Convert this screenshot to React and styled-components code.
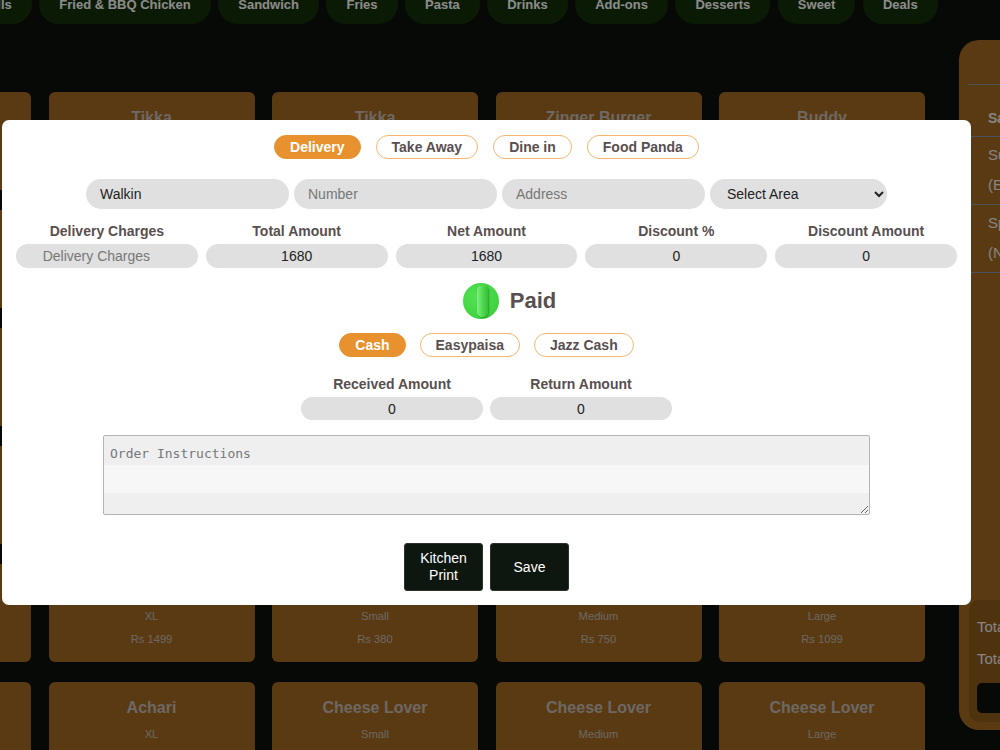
import React from 'react';
import styled, { createGlobalStyle } from 'styled-components';

const GlobalStyle = createGlobalStyle`
  * { box-sizing: border-box; }
  body {
    margin: 0;
    overflow: hidden;
    background: #0d120d;
    font-family: "Liberation Sans", Arial, sans-serif;
  }
`;

const Page = styled.div`
  width: 100vw;
  height: 100vh;
  overflow: hidden;
`;

const Categories = styled.nav`
  display: flex;
  gap: 7.5px;
  margin: -16px 0 0 -40px;
`;

const CatPill = styled.button`
  flex: none;
  height: 40px;
  padding: 0 20px;
  border: none;
  border-radius: 20px;
  background: #14300a;
  color: #ffffff;
  font: bold 13px "Liberation Sans", Arial, sans-serif;
`;

const Main = styled.main`
  display: flex;
  align-items: flex-start;
  gap: 21px;
  margin: 16px 0 0 -175px;
`;

const MenuScroll = styled.section`
  flex: none;
  width: 1113px;
  height: 660px;
  margin-top: 50px;
  padding-top: 2px;
  overflow-y: auto;

  &::-webkit-scrollbar { width: 4px; }
  &::-webkit-scrollbar-track { background: #13300a; }
  &::-webkit-scrollbar-thumb { background: #a76c25; border-radius: 2px; }
`;

const MenuGrid = styled.div`
  display: grid;
  grid-template-columns: repeat(5, 206px);
  column-gap: 17.5px;
  row-gap: 20px;
`;

const ItemCard = styled.div`
  height: 98px;
  border-radius: 6px;
  background: #a56a23;
  color: #c6beb6;
  display: flex;
  flex-direction: column;
  align-items: center;
  justify-content: center;
  gap: 9px;
`;

const ItemName = styled.div`
  font-weight: bold;
  font-size: 16px;
  line-height: 20px;
`;

const ItemMeta = styled.div`
  font-size: 11.2px;
  line-height: 14px;
`;

/* right side order panel */
const OrderPanel = styled.aside`
  flex: none;
  width: 300px;
  height: 690px;
  border-radius: 20px;
  background: #a56a23;
  padding: 0 10px 8px 9px;
  display: flex;
  flex-direction: column;
  color: #f0f0f0;
`;

const PanelHead = styled.div`
  height: 45px;
  border-bottom: 1px solid #8a98ac;
`;

const OrderRow = styled.div`
  border-bottom: 1px solid #8a98ac;
  padding: ${p => (p.head ? '25px 0 10px 20px' : '3px 0 4px 20px')};
  font-weight: ${p => (p.head ? 'bold' : 'normal')};
  font-size: ${p => (p.head ? '14px' : '15px')};
  line-height: ${p => (p.head ? '16px' : '30px')};
`;

const Summary = styled.div`
  margin-top: auto;
  margin-left: 1px;
  background: #905d1b;
  border-radius: 10px;
  padding: 11px 8px 9px;
  font-size: 15px;
`;

const SumLine = styled.div`
  line-height: 32px;
`;

const CheckoutButton = styled.div`
  margin-top: 8px;
  height: 30px;
  border-radius: 5px;
  background: #0d120d;
`;

/* modal */
const Overlay = styled.div`
  position: fixed;
  inset: 0;
  z-index: 10;
  background: rgba(0, 0, 0, 0.45);
  display: flex;
  align-items: flex-start;
  padding: 120px 0 0 2px;
`;

const Modal = styled.div`
  width: 969px;
  height: 485px;
  background: #ffffff;
  border-radius: 7px;
  padding: 15px 14px 14px;
  display: flex;
  flex-direction: column;
  align-items: center;
  color: #594f4f;
`;

const ChipRow = styled.div`
  display: flex;
  justify-content: center;
  gap: ${p => p.gap || 15}px;
  margin-top: ${p => p.top || 0}px;
`;

const Chip = styled.button`
  height: 24px;
  padding: 0 15px;
  border-radius: 12px;
  border: 1px solid ${p => (p.active ? '#e8922f' : '#f2b66e')};
  background: ${p => (p.active ? '#e8922f' : '#ffffff')};
  color: ${p => (p.active ? '#ffffff' : '#594f4f')};
  font: bold 14px "Liberation Sans", Arial, sans-serif;
`;

const CustomerRow = styled.div`
  display: flex;
  gap: 5px;
  margin-top: 20px;
`;

const TextField = styled.input`
  width: ${p => p.w || 203}px;
  height: ${p => p.h || 30}px;
  border: none;
  border-radius: 15px;
  background: #e0e0e0;
  padding: 0 ${p => p.padr || 14}px 0 14px;
  font: 14px "Liberation Sans", Arial, sans-serif;
  color: #222222;
  text-align: ${p => (p.center ? 'center' : 'left')};
  outline: none;

  &::placeholder { color: #777777; }
`;

const AreaSelect = styled.select`
  width: 177px;
  height: 30px;
  border: none;
  border-radius: 15px;
  background: #e0e0e0;
  padding: 0 8px 0 13px;
  font: 14px "Liberation Sans", Arial, sans-serif;
  color: #222222;
`;

const AmountGrid = styled.div`
  width: 100%;
  display: grid;
  grid-template-columns: repeat(${p => p.cols}, ${p => p.colw || '1fr'});
  gap: ${p => p.gap}px;
  justify-content: center;
  margin-top: ${p => p.top}px;
`;

const Field = styled.label`
  display: flex;
  flex-direction: column;
  align-items: center;
  gap: 4px;
`;

const FieldLabel = styled.span`
  font-weight: bold;
  font-size: 14px;
  line-height: 17px;
`;

const PaidRow = styled.div`
  display: flex;
  align-items: center;
  gap: 11px;
  margin-top: 15px;
  padding-left: 46px;
`;

const PaidKnob = styled.span`
  position: relative;
  width: 36px;
  height: 36px;
  border-radius: 50%;
  background: radial-gradient(circle at 40% 40%, #55e255, #3fd33f 70%, #35c435);

  &::after {
    content: "";
    position: absolute;
    left: 14px;
    top: 2px;
    width: 11px;
    height: 32px;
    border-radius: 6px;
    background: linear-gradient(90deg, #86ec86, #52dc52 45%, #37c037);
    box-shadow: 1px 1px 2px rgba(0, 0, 0, 0.3);
  }
`;

const PaidText = styled.span`
  font-weight: bold;
  font-size: 22px;
`;

const Notes = styled.textarea`
  width: 767px;
  height: 80px;
  margin-top: 15px;
  border: 1px solid #b3b3b3;
  border-radius: 2px;
  padding: 10px 6px 8px;
  background: linear-gradient(#efefef 0 29px, #f7f7f7 29px 57px, #efefef 57px);
  font: 13px/16px "DejaVu Sans Mono", "Liberation Mono", monospace;
  color: #222222;
  outline: none;

  &::placeholder { color: #777777; }
`;

const Actions = styled.div`
  display: flex;
  gap: 7px;
  margin-top: 28px;
`;

const ActionButton = styled.button`
  width: 79px;
  height: 48px;
  border: 1px solid #2a322b;
  border-radius: 3px;
  background: #0e1610;
  color: #ffffff;
  font: 14px/17px "Liberation Sans", Arial, sans-serif;
`;

const categories = ['Rolls', 'Fried & BBQ Chicken', 'Sandwich', 'Fries', 'Pasta', 'Drinks', 'Add-ons', 'Desserts', 'Sweet', 'Deals'];

const sizes = [['Small', 380], ['Medium', 750], ['Large', 1099], ['XL', 1499]];
const flavours = ['Cheese Lover', 'Pepperoni', 'Veggie Lover', 'Malai Boti', 'Kabab Crust', 'Crown Crust', 'Behari Kabab'];

const items = [
  ['Chicken Roll', 'Regular', 350], ['Tikka', 'Half', 650], ['Tikka', 'Full', 1200], ['Zinger Burger', 'Single', 450], ['Buddy', 'Regular', 550],
  ['Fajita', 'XL', 1499], ['Tikka', 'Small', 380], ['Tikka', 'Medium', 750], ['Tikka', 'Large', 1099], ['Tikka', 'XL', 1499],
  ['Fajita', 'Small', 380], ['Fajita', 'Medium', 750], ['Fajita', 'Large', 1099], ['Supreme', 'Small', 380], ['Supreme', 'Medium', 750],
  ['Supreme', 'Large', 1099], ['Supreme', 'XL', 1499], ['Hot & Spicy', 'Small', 380], ['Hot & Spicy', 'Medium', 750], ['Hot & Spicy', 'Large', 1099],
  ['Bar B Q', 'Large', 1099], ['Hot & Spicy', 'XL', 1499], ['Achari', 'Small', 380], ['Achari', 'Medium', 750], ['Achari', 'Large', 1099],
  ['Bar B Q', 'XL', 1499], ['Achari', 'XL', 1499], ['Cheese Lover', 'Small', 380], ['Cheese Lover', 'Medium', 750], ['Cheese Lover', 'Large', 1099],
  ...flavours.flatMap(f => sizes.map(([s, p]) => [f, s, p])).slice(3, 33),
];

const amounts = [
  ['Delivery Charges', '', 'Delivery Charges', 35],
  ['Total Amount', '1680'],
  ['Net Amount', '1680'],
  ['Discount %', '0'],
  ['Discount Amount', '0'],
];

export default function App() {
  return (
    <Page>
      <GlobalStyle />
      <Categories>
        {categories.map(c => <CatPill key={c}>{c}</CatPill>)}
      </Categories>

      <Main>
        <MenuScroll>
          <MenuGrid>
            {items.map(([name, size, price], i) => (
              <ItemCard key={i}>
                <ItemName>{name}</ItemName>
                <ItemMeta>{size}</ItemMeta>
                <ItemMeta>Rs {price}</ItemMeta>
              </ItemCard>
            ))}
          </MenuGrid>
        </MenuScroll>

        <OrderPanel>
          <PanelHead />
          <OrderRow head>Sale Items</OrderRow>
          <OrderRow>Supreme Large<br />(Extra Cheese)</OrderRow>
          <OrderRow>Spicy Wings<br />(No Sauce)</OrderRow>
          <Summary>
            <SumLine>Total Items</SumLine>
            <SumLine>Total Amount</SumLine>
            <CheckoutButton />
          </Summary>
        </OrderPanel>
      </Main>

      <Overlay>
        <Modal>
          <ChipRow>
            <Chip active>Delivery</Chip>
            <Chip>Take Away</Chip>
            <Chip>Dine in</Chip>
            <Chip>Food Panda</Chip>
          </ChipRow>

          <CustomerRow>
            <TextField defaultValue="Walkin" />
            <TextField placeholder="Number" />
            <TextField placeholder="Address" />
            <AreaSelect defaultValue="">
              <option value="">Select Area</option>
              <option value="dha">DHA</option>
              <option value="gulberg">Gulberg</option>
            </AreaSelect>
          </CustomerRow>

          <AmountGrid cols={5} gap={8} top={14}>
            {amounts.map(([label, value, ph, padr]) => (
              <Field key={label}>
                <FieldLabel>{label}</FieldLabel>
                <TextField h={24} center padr={padr} defaultValue={value} placeholder={ph} style={{ width: '100%' }} />
              </Field>
            ))}
          </AmountGrid>

          <PaidRow>
            <PaidKnob />
            <PaidText>Paid</PaidText>
          </PaidRow>

          <ChipRow gap={14} top={14}>
            <Chip active>Cash</Chip>
            <Chip>Easypaisa</Chip>
            <Chip>Jazz Cash</Chip>
          </ChipRow>

          <AmountGrid cols={2} colw="182px" gap={7} top={19}>
            <Field>
              <FieldLabel>Received Amount</FieldLabel>
              <TextField w={182} h={23} center defaultValue="0" />
            </Field>
            <Field>
              <FieldLabel>Return Amount</FieldLabel>
              <TextField w={182} h={23} center defaultValue="0" />
            </Field>
          </AmountGrid>

          <Notes placeholder="Order Instructions" />

          <Actions>
            <ActionButton>Kitchen<br />Print</ActionButton>
            <ActionButton>Save</ActionButton>
          </Actions>
        </Modal>
      </Overlay>
    </Page>
  );
}
